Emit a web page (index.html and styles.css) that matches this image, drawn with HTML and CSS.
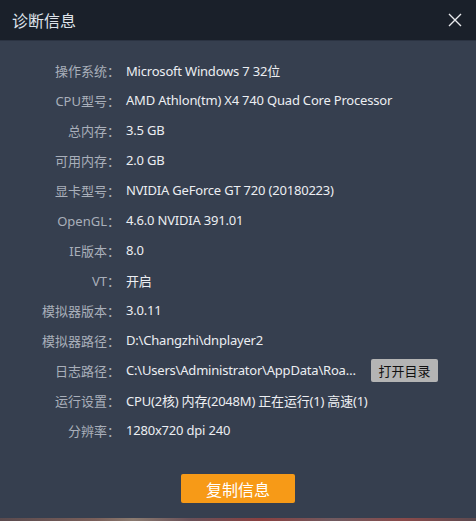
FILE: index.html
```html
<!DOCTYPE html>
<html lang="zh-CN">
<head>
    <meta charset="UTF-8">
    <title>诊断信息</title>
    <link rel="stylesheet" href="styles.css">
</head>
<body>
    <div class="dialog">
        <header class="title-bar">
            <h1>诊断信息</h1>
            <button class="close-btn" aria-label="关闭">
                <svg width="14" height="14" viewBox="0 0 14 14">
                    <path d="M1 1 L13 13 M13 1 L1 13" stroke="#e8eaee" stroke-width="1.4" fill="none"/>
                </svg>
            </button>
        </header>

        <section class="info-list">
            <div class="label">操作系统：</div>
            <div class="value">Microsoft Windows 7 32位</div>

            <div class="label">CPU型号：</div>
            <div class="value">AMD Athlon(tm) X4 740 Quad Core Processor</div>

            <div class="label">总内存：</div>
            <div class="value">3.5 GB</div>

            <div class="label">可用内存：</div>
            <div class="value">2.0 GB</div>

            <div class="label">显卡型号：</div>
            <div class="value">NVIDIA GeForce GT 720 (20180223)</div>

            <div class="label">OpenGL：</div>
            <div class="value">4.6.0 NVIDIA 391.01</div>

            <div class="label">IE版本：</div>
            <div class="value">8.0</div>

            <div class="label">VT：</div>
            <div class="value">开启</div>

            <div class="label">模拟器版本：</div>
            <div class="value">3.0.11</div>

            <div class="label">模拟器路径：</div>
            <div class="value">D:\Changzhi\dnplayer2</div>

            <div class="label">日志路径：</div>
            <div class="value with-action">
                <span class="path">C:\Users\Administrator\AppData\Roaming\ChangZhi2\dnplayer</span>
                <button class="open-btn">打开目录</button>
            </div>

            <div class="label">运行设置：</div>
            <div class="value">CPU(2核) 内存(2048M) 正在运行(1) 高速(1)</div>

            <div class="label">分辨率：</div>
            <div class="value">1280x720 dpi 240</div>
        </section>

        <footer class="actions">
            <button class="copy-btn">复制信息</button>
        </footer>
    </div>
    <div class="backdrop"></div>
</body>
</html>
```

FILE: styles.css
```css
body {
    margin: 0;
    background: #363f4f;
    font-family: "Noto Sans", "Noto Sans CJK SC", sans-serif;
    font-size: 13px;
    overflow: hidden;
}

.dialog {
    width: 476px;
    height: 518px;
    background: #363f4f;
    display: flex;
    flex-direction: column;
}

.title-bar {
    height: 40px;
    background: #1a202a;
    border-bottom: 1px solid #2b3342;
    display: flex;
    align-items: center;
    justify-content: space-between;
    padding: 0 12px;
}

.title-bar h1 {
    margin: 0;
    font-size: 16px;
    font-weight: normal;
    color: #dfe3ea;
}

.close-btn {
    background: none;
    border: none;
    padding: 0;
    margin-right: 2px;
    width: 14px;
    height: 14px;
    cursor: pointer;
}

.info-list {
    display: grid;
    grid-template-columns: 120px 1fr;
    column-gap: 6px;
    grid-auto-rows: 30px;
    align-items: center;
    padding-top: 14px;
}

.label {
    text-align: right;
    color: #a9afba;
    white-space: nowrap;
}

.value {
    color: #eceef2;
    white-space: nowrap;
    letter-spacing: -0.2px;
}

.with-action {
    display: flex;
    align-items: center;
    gap: 5px;
}

.path {
    width: 240px;
    overflow: hidden;
    text-overflow: ellipsis;
}

.open-btn {
    flex: none;
    background: #b4b4b4;
    border: none;
    border-radius: 2px;
    height: 23px;
    width: 67px;
    padding: 0;
    font: inherit;
    letter-spacing: 0;
    color: #111;
    cursor: pointer;
}

.actions {
    margin-top: auto;
    padding-bottom: 15px;
    display: flex;
    justify-content: center;
}

.copy-btn {
    width: 114px;
    height: 29px;
    background: #f79a17;
    border: none;
    border-radius: 2px;
    color: #fff;
    font: inherit;
    font-size: 16px;
    cursor: pointer;
}

/* a bit of the desktop behind the dialog */
.backdrop {
    height: 3px;
    background: linear-gradient(90deg, #5a4a4e, #7a5f5a 20%, #8a7a70 28%, #6a5058 40%, #8a4040 55%, #705a60 70%, #8a4a4a 85%, #5c4a50);
}
```
